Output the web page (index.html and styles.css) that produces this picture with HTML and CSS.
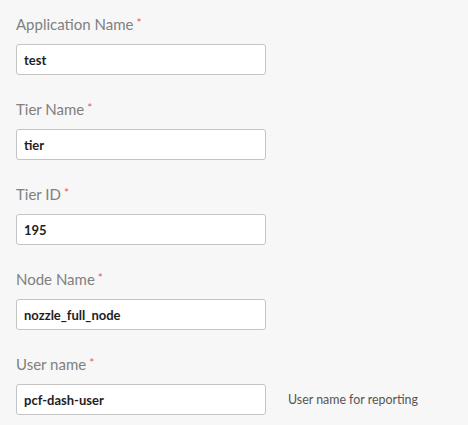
FILE: index.html
```html
<!DOCTYPE html>
<html>
<head>
<meta charset="utf-8">
<link rel="stylesheet" href="styles.css">
</head>
<body>
<form class="form">
  <div class="field">
    <label class="label">Application Name<span class="req">*</span></label>
    <div class="control"><input class="input" type="text" value="test"></div>
  </div>
  <div class="field">
    <label class="label">Tier Name<span class="req">*</span></label>
    <div class="control"><input class="input" type="text" value="tier"></div>
  </div>
  <div class="field">
    <label class="label">Tier ID<span class="req">*</span></label>
    <div class="control"><input class="input" type="text" value="195"></div>
  </div>
  <div class="field">
    <label class="label">Node Name<span class="req">*</span></label>
    <div class="control"><input class="input" type="text" value="nozzle_full_node"></div>
  </div>
  <div class="field">
    <label class="label">User name<span class="req">*</span></label>
    <div class="control"><input class="input" type="text" value="pcf-dash-user"><span class="help">User name for reporting</span></div>
  </div>
</form>
</body>
</html>
```
FILE: styles.css
```css
html, body {
  margin: 0;
  padding: 0;
  background: #f7f7f7;
  font-family: Lato, "Open Sans", sans-serif;
}
.form {
  display: flex;
  flex-direction: column;
  gap: 24px;
  padding: 14px 16px 0 16px;
}
.field {
  display: flex;
  flex-direction: column;
  gap: 10px;
}
.label {
  font-size: 15px;
  line-height: 20px;
  height: 20px;
  color: #808080;
  font-weight: 400;
}
.req {
  color: #e85a5a;
  font-size: 12px;
  vertical-align: top;
  margin-left: 3px;
  position: relative;
  top: -1px;
}
.control {
  display: flex;
  align-items: center;
}
.input {
  box-sizing: border-box;
  width: 250px;
  height: 31px;
  margin: 0;
  padding: 0 7px;
  border: 1px solid #c4c4c4;
  border-radius: 3px;
  background: #fff;
  font-family: Lato, "Open Sans", sans-serif;
  font-size: 13px;
  font-weight: 700;
  color: #1e1e1e;
  outline: none;
}
.help {
  margin-left: 22px;
  font-size: 12.4px;
  color: #555;
}
```
